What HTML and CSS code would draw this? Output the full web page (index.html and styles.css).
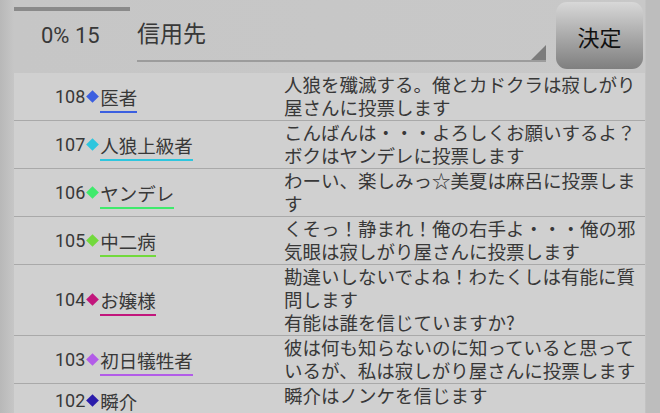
FILE: index.html
```html
<!DOCTYPE html>
<html lang="ja">
<head>
  <meta charset="UTF-8" />
  <title>投票</title>
  <link rel="stylesheet" href="styles.css">
</head>
<body>

  <!-- Top bar -->
  <div class="top">
    <div class="stat">
      <div class="bar"></div>
      <div class="stat-text">0% 15</div>
    </div>
    <div class="spinner">
      <span class="spinner-label">信用先</span>
      <span class="spinner-arrow"></span>
    </div>
    <button class="btn">決定</button>
  </div>

  <!-- Player list -->
  <div class="list">
    <div class="row">
      <div class="who">108<i class="dia" style="background:#3b5fe0"></i><span class="name" style="border-color:#3b5fe0">医者</span></div>
      <div class="msg">人狼を殲滅する。俺とカドクラは寂しがり屋さんに投票します</div>
    </div>
    <div class="row">
      <div class="who">107<i class="dia" style="background:#2ec6de"></i><span class="name" style="border-color:#2ec6de">人狼上級者</span></div>
      <div class="msg">こんばんは・・・よろしくお願いするよ？ボクはヤンデレに投票します</div>
    </div>
    <div class="row">
      <div class="who">106<i class="dia" style="background:#3fea6c"></i><span class="name" style="border-color:#3fea6c">ヤンデレ</span></div>
      <div class="msg">わーい、楽しみっ☆美夏は麻呂に投票します</div>
    </div>
    <div class="row">
      <div class="who">105<i class="dia" style="background:#72d93c"></i><span class="name" style="border-color:#72d93c">中二病</span></div>
      <div class="msg">くそっ！静まれ！俺の右手よ・・・俺の邪気眼は寂しがり屋さんに投票します</div>
    </div>
    <div class="row">
      <div class="who">104<i class="dia" style="background:#c2167c"></i><span class="name" style="border-color:#c2167c">お嬢様</span></div>
      <div class="msg">勘違いしないでよね！わたくしは有能に質問します<br>有能は誰を信じていますか?</div>
    </div>
    <div class="row">
      <div class="who">103<i class="dia" style="background:#b25ce8"></i><span class="name" style="border-color:#b25ce8">初日犠牲者</span></div>
      <div class="msg">彼は何も知らないのに知っていると思っているが、私は寂しがり屋さんに投票します</div>
    </div>
    <div class="row">
      <div class="who">102<i class="dia" style="background:#2b1cab"></i><span class="name" style="border-color:#2b1cab">瞬介</span></div>
      <div class="msg">瞬介はノンケを信じます</div>
    </div>
  </div>

</body>
</html>
```

FILE: styles.css
```css
/* Global */
body {
  margin: 0;
  width: 660px;
  height: 413px;
  overflow: hidden;
  font-family: Roboto, "Noto Sans CJK JP", sans-serif;
  color: #383838;
  background: linear-gradient(to right, #b8b8b8 0px, #c6c6c6 14px, #c8c8c8 645px, #bdbdbd 646px);
}

/* Top bar */
.top {
  display: flex;
  height: 73px;
}

.stat {
  width: 123px;
  margin-left: 14px;
}

.bar {
  width: 116px;
  height: 4px;
  margin-top: 7px;
  background-color: #8a8a8a;
}

.stat-text {
  font-size: 22px;
  padding-left: 27px;
  margin-top: 12px;
}

.spinner {
  position: relative;
  flex: 1;
  height: 60px;
  margin-right: 10px;
  border-bottom: 2px solid #9c9c9c;
}

.spinner-label {
  display: block;
  font-family: "Noto Sans CJK JP", sans-serif;
  font-size: 23px;
  line-height: 30px;
  padding-top: 17px;
}

.spinner-arrow {
  position: absolute;
  right: 0;
  bottom: 0;
  width: 0;
  height: 0;
  border-left: 15px solid transparent;
  border-bottom: 15px solid #7c7c7c;
}

.btn {
  width: 87px;
  height: 67px;
  margin: 2px 17px 0 0;
  padding: 0;
  border: none;
  border-radius: 11px;
  background: linear-gradient(#d8d8d8, #a6a6a6 55%, #7f7f7f);
  font-family: "Noto Sans CJK JP", sans-serif;
  font-size: 22px;
  color: #111;
}

/* List */
.list {
  margin: 0 15px 0 14px;
  background-color: #d0d0d0;
}

.row {
  display: grid;
  grid-template-columns: 269px 1fr;
  padding-bottom: 1px;
  border-bottom: 1px solid #a9a9a9;
}

.who {
  display: flex;
  align-items: center;
  padding-left: 41px;
  font-size: 18px;
}

.dia {
  display: inline-block;
  width: 9px;
  height: 9px;
  margin: 0 3px 0 3px;
  transform: rotate(45deg);
}

.name {
  font-family: "Noto Sans CJK JP", sans-serif;
  font-size: 18.5px;
  line-height: 22px;
  padding-top: 6px;
  padding-bottom: 3px;
  border-bottom: 2px solid;
}

.msg {
  font-family: "Noto Sans CJK JP", sans-serif;
  font-size: 18.5px;
  line-height: 23px;
  padding-left: 1px;
  padding-right: 2px;
}
```
